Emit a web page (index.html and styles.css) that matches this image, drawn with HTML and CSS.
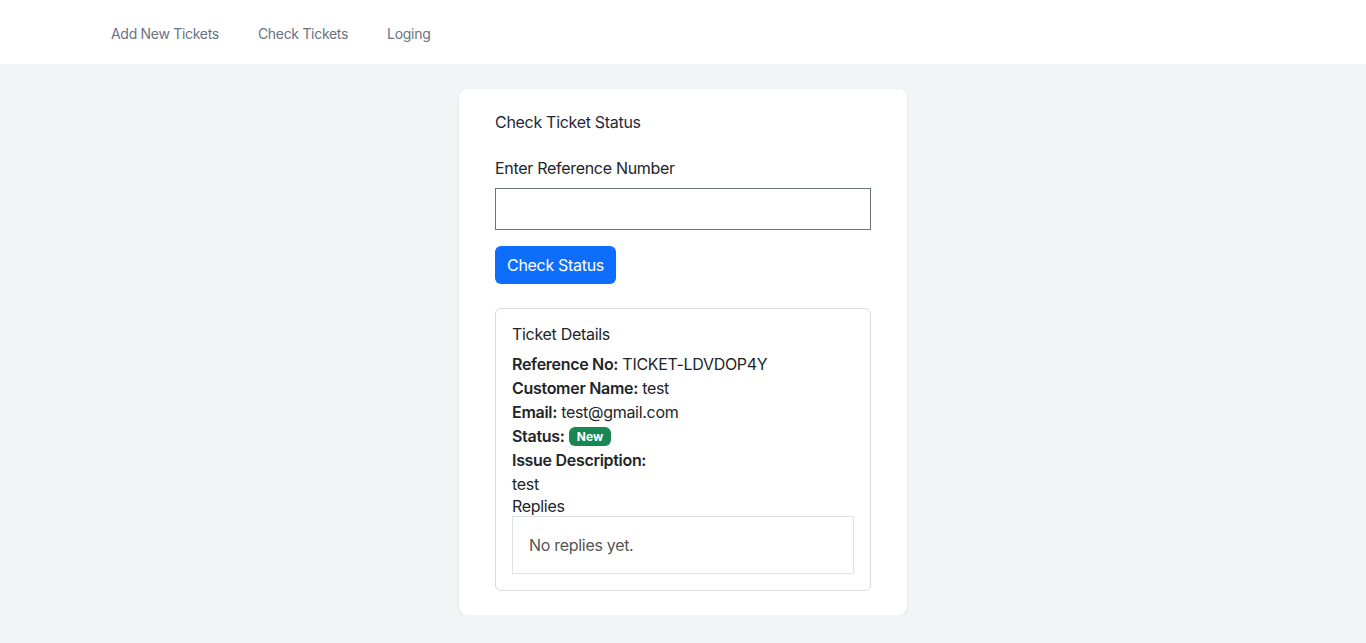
FILE: index.html
```html
<!DOCTYPE html>
<html>
<head>
<meta charset="utf-8">
<link rel="stylesheet" href="styles.css">
</head>
<body>
<nav class="topnav">
  <a class="nav-link" href="#">Add New Tickets</a>
  <a class="nav-link" href="#">Check Tickets</a>
  <a class="nav-link" href="#">Loging</a>
</nav>
<main class="page">
  <section class="card">
    <h2 class="card-title">Check Ticket Status</h2>
    <label class="field-label" for="ref">Enter Reference Number</label>
    <input class="field-input" id="ref" type="text">
    <button class="btn-primary" type="button">Check Status</button>
    <div class="details">
      <h3 class="details-title">Ticket Details</h3>
      <p class="row"><strong>Reference No:</strong> TICKET-LDVDOP4Y</p>
      <p class="row"><strong>Customer Name:</strong> test</p>
      <p class="row"><strong>Email:</strong> test@gmail.com</p>
      <p class="row"><strong>Status:</strong> <span class="badge">New</span></p>
      <p class="row"><strong>Issue Description:</strong></p>
      <p class="row">test</p>
      <h4 class="replies-title">Replies</h4>
      <div class="replies">No replies yet.</div>
    </div>
  </section>
</main>
</body>
</html>
```
FILE: styles.css
```css
* { box-sizing: border-box; }
html, body { margin: 0; padding: 0; }
body {
  font-family: Inter, "Liberation Sans", sans-serif;
  background: #f3f4f6;
  color: #212529;
  font-size: 16px;
  letter-spacing: -0.3px;
}
.topnav {
  height: 64px;
  background: #fff;
  display: flex;
  align-items: center;
  gap: 39px;
  padding-left: 111px;
  padding-top: 2px;
}
.nav-link {
  font-size: 14px;
  color: #6b7280;
  text-decoration: none;
  letter-spacing: -0.3px;
}
.page {
  display: flex;
  justify-content: center;
  padding-top: 25px;
}
.card {
  width: 448px;
  background: #fff;
  border-radius: 8px;
  box-shadow: 0 1px 3px rgba(0,0,0,0.08), 0 1px 2px rgba(0,0,0,0.04);
  padding: 23px 36px 24px;
  display: flex;
  flex-direction: column;
  align-items: flex-start;
}
.card-title {
  margin: 0 0 24px;
  font-size: 16px;
  font-weight: 400;
  line-height: 20px;
  color: #1f2937;
}
.field-label {
  font-size: 16px;
  line-height: 24px;
  color: #212529;
  margin-bottom: 8px;
}
.field-input {
  width: 376px;
  height: 42px;
  border: 1px solid #6b7280;
  border-radius: 0;
  margin: 0 0 16px;
  font: inherit;
}
.btn-primary {
  height: 38px;
  padding: 0 12px;
  background: #0d6efd;
  color: #fff;
  border: none;
  border-radius: 6px;
  font: inherit;
  font-size: 16px;
  letter-spacing: -0.3px;
  margin-bottom: 24px;
}
.details {
  width: 376px;
  border: 1px solid #d9dbde;
  border-radius: 6px;
  padding: 15px 16px 16px;
}
.details-title {
  margin: 0 0 8px;
  font-size: 16px;
  font-weight: 400;
  line-height: 20px;
}
.row {
  margin: 0;
  line-height: 24px;
}
.row strong { font-weight: 600; }
.badge {
  display: inline-block;
  background: #198754;
  color: #fff;
  font-size: 12px;
  font-weight: 700;
  line-height: 19px;
  padding: 0 8px;
  border-radius: 6px;
  vertical-align: 1px;
  letter-spacing: 0;
}
.replies-title {
  margin: 0;
  font-size: 16px;
  font-weight: 400;
  line-height: 20px;
}
.replies {
  border: 1px solid #dee2e6;
  padding: 16px;
  line-height: 24px;
  color: #555;
}
```
